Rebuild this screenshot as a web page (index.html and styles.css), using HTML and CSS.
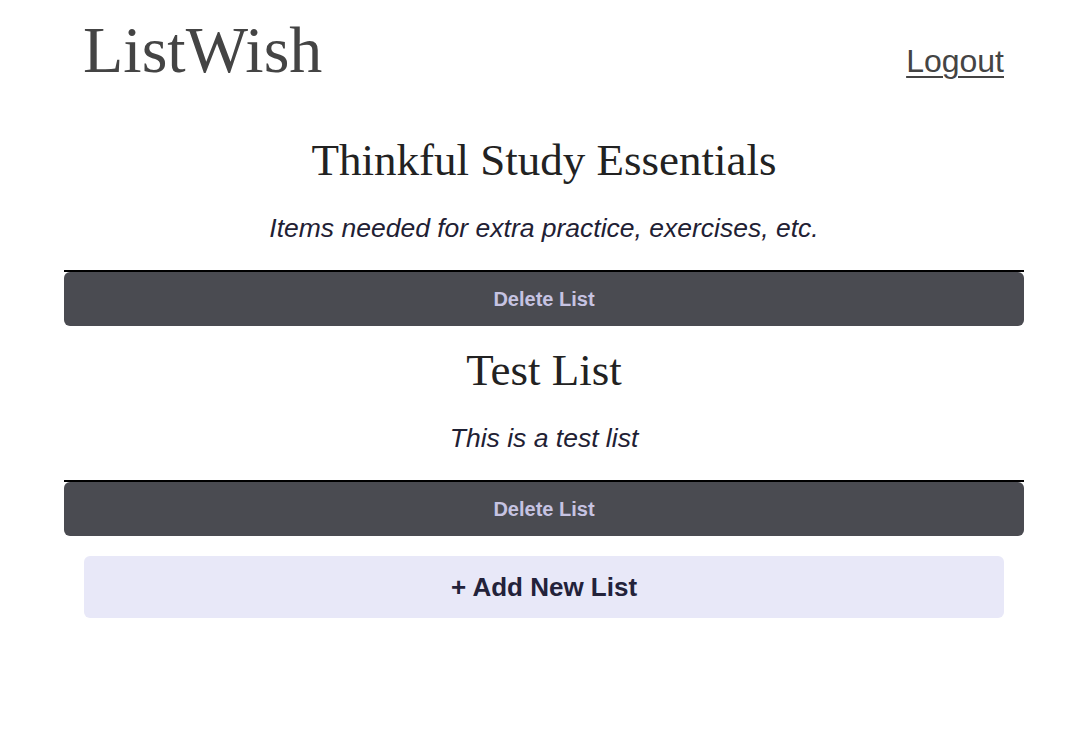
FILE: index.html
```html
<!DOCTYPE html>
<html lang="en">
<head>
<meta charset="utf-8">
<title>ListWish</title>
<link rel="stylesheet" href="styles.css">
</head>
<body>
  <header class="site-header">
    <h1 class="brand">ListWish</h1>
    <a class="logout" href="#">Logout</a>
  </header>
  <main class="lists">
    <section class="list">
      <h2 class="list-title">Thinkful Study Essentials</h2>
      <p class="list-desc">Items needed for extra practice, exercises, etc.</p>
      <button class="delete-btn">Delete List</button>
    </section>
    <section class="list">
      <h2 class="list-title">Test List</h2>
      <p class="list-desc">This is a test list</p>
      <button class="delete-btn">Delete List</button>
    </section>
    <button class="add-btn">+ Add New List</button>
  </main>
</body>
</html>
```

FILE: styles.css
```css
html, body {
  margin: 0;
  padding: 0;
  background: #ffffff;
}

body {
  font-family: "Liberation Sans", Arial, sans-serif;
}

.site-header {
  display: flex;
  justify-content: space-between;
  align-items: baseline;
  padding: 12px 80px 0 83px;
}

.brand {
  margin: 0;
  font-family: "Liberation Serif", "Times New Roman", serif;
  font-weight: normal;
  font-size: 66px;
  line-height: normal;
  color: #444444;
}

.logout {
  font-family: "Liberation Sans", Arial, sans-serif;
  font-size: 32px;
  color: #444444;
  text-decoration: underline;
  text-underline-offset: 4px;
  text-decoration-thickness: 2px;
}

.lists {
  display: flex;
  flex-direction: column;
  margin: 28px 60px 0 64px;
}

.list {
  display: flex;
  flex-direction: column;
  text-align: center;
}

.list-title {
  margin: 18px 0 0;
  font-family: "Liberation Serif", "Times New Roman", serif;
  font-weight: normal;
  font-size: 45px;
  line-height: normal;
  color: #222222;
}

.list-desc {
  margin: 27px 0 26px;
  font-style: italic;
  font-size: 26.5px;
  line-height: normal;
  color: #1f2134;
}

.delete-btn {
  border: none;
  border-top: 2px solid #000000;
  background: transparent;
  padding: 0;
  height: 56px;
  font-family: "Liberation Sans", Arial, sans-serif;
  font-weight: bold;
  font-size: 20px;
  color: #c6c3e2;
  position: relative;
  z-index: 0;
}

.delete-btn::before {
  content: "";
  position: absolute;
  inset: 0;
  background: #4a4b51;
  border-radius: 6px;
  z-index: -1;
}

.add-btn {
  margin: 20px 20px 0 20px;
  height: 62px;
  border: none;
  border-radius: 6px;
  background: #e8e8f8;
  font-family: "Liberation Sans", Arial, sans-serif;
  font-weight: bold;
  font-size: 26px;
  color: #23223a;
}
```
